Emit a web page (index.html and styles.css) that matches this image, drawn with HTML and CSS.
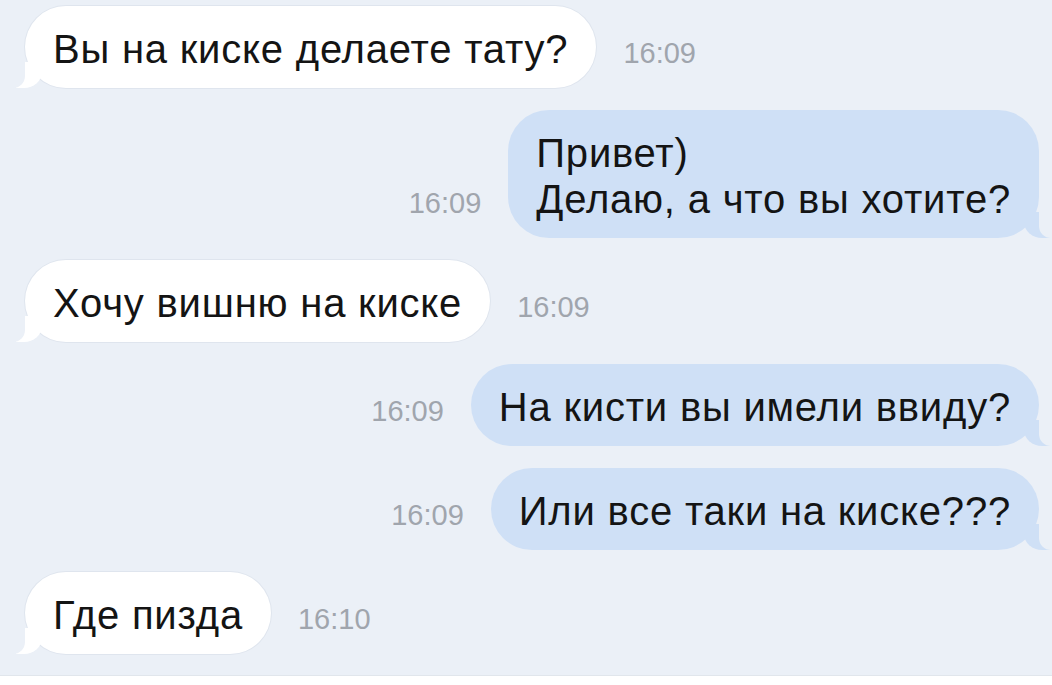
FILE: index.html
```html
<!DOCTYPE html>
<html lang="ru">
<head>
    <meta charset="UTF-8">
    <meta name="viewport" content="width=device-width, initial-scale=1.0">
    <title>Сообщения</title>
    <link rel="stylesheet" href="styles.css">
</head>
<body>
    <div class="chat">
        <div class="row in">
            <div class="bubble">Вы на киске делаете тату?</div>
            <span class="time">16:09</span>
        </div>
        <div class="row out">
            <span class="time">16:09</span>
            <div class="bubble">Привет)<br>Делаю, а что вы хотите?</div>
        </div>
        <div class="row in">
            <div class="bubble">Хочу вишню на киске</div>
            <span class="time">16:09</span>
        </div>
        <div class="row out">
            <span class="time">16:09</span>
            <div class="bubble">На кисти вы имели ввиду?</div>
        </div>
        <div class="row out">
            <span class="time">16:09</span>
            <div class="bubble">Или все таки на киске???</div>
        </div>
        <div class="row in">
            <div class="bubble">Где пизда</div>
            <span class="time">16:10</span>
        </div>
    </div>
    <div class="composer"></div>
</body>
</html>
```

FILE: styles.css
```css
body {
    margin: 0;
    background: #ebf0f7;
    font-family: 'Liberation Sans', Arial, sans-serif;
    color: #141414;
    overflow: hidden;
}
.chat {
    display: flex;
    flex-direction: column;
    gap: 22px;
    padding: 6px 13px 0 25px;
    height: 675px;
    box-sizing: border-box;
}
.row {
    display: flex;
    align-items: last baseline;
    gap: 27px;
}
.row.out {
    justify-content: flex-end;
}
.bubble {
    position: relative;
    padding: 20px 28px 16px;
    font-size: 40px;
    letter-spacing: 0.8px;
    line-height: 46px;
    border-radius: 41px;
    white-space: nowrap;
}
.in .bubble {
    background: #fff;
    box-shadow: 0 0 0 1px #dfe5ee;
}
.out .bubble {
    background: #cfe0f6;
}
/* хвостики пузырей */
.bubble::before,
.bubble::after {
    content: "";
    position: absolute;
    bottom: 0;
    height: 26px;
}
.in .bubble::before {
    left: -9px;
    width: 26px;
    background: #fff;
    border-bottom-right-radius: 18px 16px;
}
.in .bubble::after {
    left: -24px;
    width: 24px;
    background: #ebf0f7;
    border-bottom-right-radius: 12px;
}
.out .bubble::before {
    right: -11px;
    width: 26px;
    background: #cfe0f6;
    border-bottom-left-radius: 18px 16px;
}
.out .bubble::after {
    right: -26px;
    width: 26px;
    background: #ebf0f7;
    border-bottom-left-radius: 12px;
}
.time {
    font-size: 29px;
    color: #a0a5ad;
}
.composer {
    height: 10px;
    background: #fff;
    border-top: 1px solid #e1e6ec;
}
```
